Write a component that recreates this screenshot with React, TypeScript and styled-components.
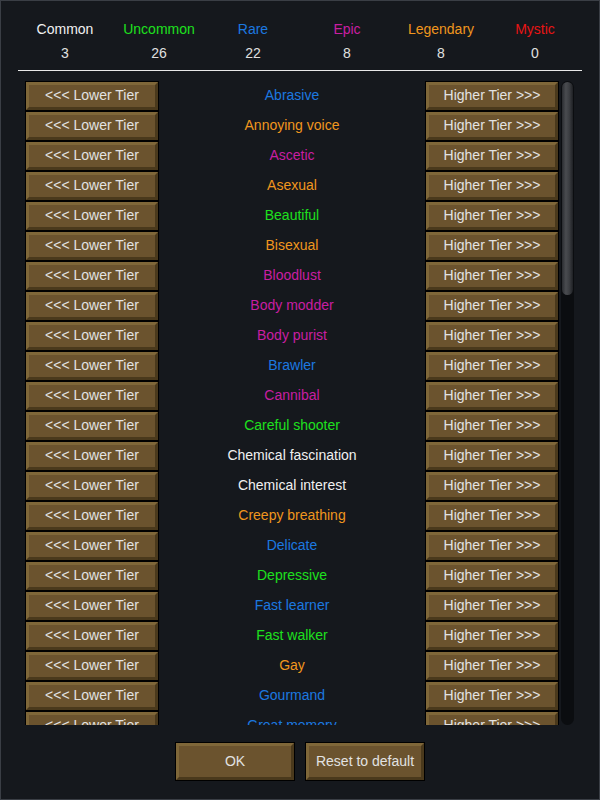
import React from "react";
import styled, { createGlobalStyle } from "styled-components";

const Global = createGlobalStyle`
  html, body { margin: 0; padding: 0; background: #15181d; }
  * { box-sizing: border-box; }
`;

const Window = styled.div`
  width: 600px;
  height: 800px;
  border: 1px solid #3a3e45;
  background: #15181d;
  padding: 16px 17px 0 17px;
  display: flex;
  flex-direction: column;
  font-family: "Liberation Sans", Arial, sans-serif;
  font-size: 14px;
  color: #e6e6e6;
  overflow: hidden;
`;

const Header = styled.div`
  display: grid;
  grid-template-columns: repeat(6, 94px);
`;

const TierCol = styled.div`
  display: flex;
  flex-direction: column;
  align-items: center;
`;

const TierLabel = styled.div<{ $color: string }>`
  line-height: 24px;
  color: ${(p) => p.$color};
`;

const TierCount = styled.div`
  line-height: 24px;
  color: #e0e0e0;
`;

const Divider = styled.div`
  margin-top: 5px;
  height: 1px;
  background: #e8e8e8;
`;

const ScrollArea = styled.div`
  margin-top: 10px;
  height: 644px;
  padding-left: 7px;
  display: flex;
  gap: 2px;
  overflow: hidden;
`;

const List = styled.div`
  width: 534px;
  display: flex;
  flex-direction: column;
  flex-shrink: 0;
`;

const Row = styled.div`
  height: 30px;
  flex-shrink: 0;
  display: grid;
  grid-template-columns: 132px 1fr 132px;
  align-items: center;
  padding: 0 1px;
`;

const BevelButton = styled.button<{ $w?: number; $h?: number }>`
  width: ${(p) => (p.$w ? `${p.$w}px` : "100%")};
  height: ${(p) => p.$h ?? 28}px;
  margin: 0;
  padding: 0 0 2px 0;
  background: #6b532e;
  border-style: solid;
  border-width: 3px;
  border-color: #7f6739 #4a391c #4a391c #7f6739;
  box-shadow: 0 0 0 1px #000;
  color: #e2e2e2;
  font-family: "Liberation Sans", Arial, sans-serif;
  font-size: 14px;
  display: flex;
  align-items: center;
  justify-content: center;
  white-space: nowrap;
  cursor: pointer;
`;

const TraitName = styled.div<{ $color: string }>`
  text-align: center;
  color: ${(p) => p.$color};
  white-space: nowrap;
  padding-bottom: 2px;
`;

const Track = styled.div`
  width: 13px;
  height: 644px;
  background: #0b0d10;
  border-radius: 7px;
  padding: 1px 1px;
  display: flex;
  flex-direction: column;
  flex-shrink: 0;
`;

const Thumb = styled.div`
  height: 213px;
  width: 11px;
  border-radius: 6px;
  background: linear-gradient(90deg, #2a2c30 0%, #4a4c50 35%, #3c3e42 65%, #1e2024 100%);
`;

const Footer = styled.div`
  margin-top: 18px;
  display: flex;
  justify-content: center;
  gap: 12px;
`;

const C = {
  white: "#f0f0f0",
  green: "#1ee01e",
  blue: "#1c78e0",
  magenta: "#c81ea2",
  orange: "#f0961e",
  red: "#e81414",
};

const tiers = [
  { name: "Common", color: C.white, count: 3 },
  { name: "Uncommon", color: C.green, count: 26 },
  { name: "Rare", color: C.blue, count: 22 },
  { name: "Epic", color: C.magenta, count: 8 },
  { name: "Legendary", color: C.orange, count: 8 },
  { name: "Mystic", color: C.red, count: 0 },
];

const traits: [string, string][] = [
  ["Abrasive", C.blue],
  ["Annoying voice", C.orange],
  ["Ascetic", C.magenta],
  ["Asexual", C.orange],
  ["Beautiful", C.green],
  ["Bisexual", C.orange],
  ["Bloodlust", C.magenta],
  ["Body modder", C.magenta],
  ["Body purist", C.magenta],
  ["Brawler", C.blue],
  ["Cannibal", C.magenta],
  ["Careful shooter", C.green],
  ["Chemical fascination", C.white],
  ["Chemical interest", C.white],
  ["Creepy breathing", C.orange],
  ["Delicate", C.blue],
  ["Depressive", C.green],
  ["Fast learner", C.blue],
  ["Fast walker", C.green],
  ["Gay", C.orange],
  ["Gourmand", C.blue],
  ["Great memory", C.blue],
];

export default function App() {
  return (
    <>
      <Global />
      <Window>
        <Header>
          {tiers.map((t) => (
            <TierCol key={t.name}>
              <TierLabel $color={t.color}>{t.name}</TierLabel>
              <TierCount>{t.count}</TierCount>
            </TierCol>
          ))}
        </Header>
        <Divider />
        <ScrollArea>
          <List>
            {traits.map(([name, color]) => (
              <Row key={name}>
                <BevelButton>{"<<< Lower Tier"}</BevelButton>
                <TraitName $color={color}>{name}</TraitName>
                <BevelButton>{"Higher Tier >>>"}</BevelButton>
              </Row>
            ))}
          </List>
          <Track>
            <Thumb />
          </Track>
        </ScrollArea>
        <Footer>
          <BevelButton $w={118} $h={37}>OK</BevelButton>
          <BevelButton $w={118} $h={37}>Reset to default</BevelButton>
        </Footer>
      </Window>
    </>
  );
}
